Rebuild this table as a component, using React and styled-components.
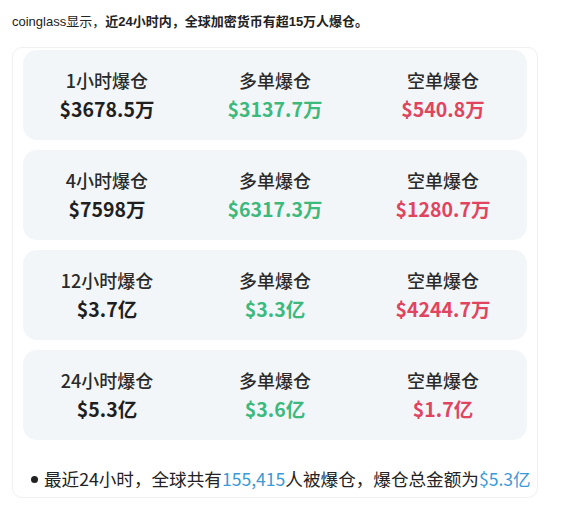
import React from "react";
import styled, { createGlobalStyle } from "styled-components";

const GlobalStyle = createGlobalStyle`
  body {
    margin: 0;
    background: #ffffff;
    font-family: "Noto Sans CJK SC", "Noto Sans", sans-serif;
    color: #222;
  }
`;

const Page = styled.div`
  width: 563px;
  height: 508px;
  padding: 11px 12px 0 12px;
  box-sizing: border-box;
`;

const Intro = styled.p`
  margin: 0;
  font-size: 13px;
  line-height: 22px;
  color: #222;
  font-family: "Liberation Sans", "Noto Sans CJK SC", sans-serif;

  b {
    font-weight: 700;
  }
`;

const Card = styled.div`
  margin-top: 14px;
  width: 526px;
  box-sizing: border-box;
  border: 1px solid #eef0f2;
  border-radius: 10px;
  padding: 2px 10px 0 10px;
  display: flex;
  flex-direction: column;
  gap: 10px;
`;

const Row = styled.div`
  height: 90px;
  border-radius: 14px;
  background: #f3f6f9;
  display: grid;
  grid-template-columns: repeat(3, 1fr);
  align-items: center;
`;

const Cell = styled.div`
  display: flex;
  flex-direction: column;
  align-items: center;
  gap: 2px;
`;

const Label = styled.div`
  font-size: 18px;
  font-weight: 500;
  line-height: 26px;
  color: #2a2a2a;
`;

const colors = {
  dark: "#1f1f1f",
  green: "#3cb97c",
  red: "#e1445f",
};

const Value = styled.div`
  font-size: 19.5px;
  font-weight: 700;
  line-height: 28px;
  color: ${(p) => colors[p.$tone]};
`;

const Summary = styled.div`
  display: flex;
  align-items: center;
  gap: 6px;
  padding: 17px 0 6px 8px;
  font-size: 17.6px;
  line-height: 24px;
  color: #222;
  white-space: nowrap;
`;

const Dot = styled.span`
  width: 7px;
  height: 7px;
  border-radius: 50%;
  background: #222;
  flex: none;
`;

const Blue = styled.span`
  color: #3a9ad9;
`;

const rows = [
  ["1小时爆仓", "$3678.5万", "$3137.7万", "$540.8万"],
  ["4小时爆仓", "$7598万", "$6317.3万", "$1280.7万"],
  ["12小时爆仓", "$3.7亿", "$3.3亿", "$4244.7万"],
  ["24小时爆仓", "$5.3亿", "$3.6亿", "$1.7亿"],
];

export default function App() {
  return (
    <Page>
      <GlobalStyle />
      <Intro>
        coinglass显示，<b>近24小时内，全球加密货币有超15万人爆仓。</b>
      </Intro>
      <Card>
        {rows.map(([label, total, long, short]) => (
          <Row key={label}>
            <Cell>
              <Label>{label}</Label>
              <Value $tone="dark">{total}</Value>
            </Cell>
            <Cell>
              <Label>多单爆仓</Label>
              <Value $tone="green">{long}</Value>
            </Cell>
            <Cell>
              <Label>空单爆仓</Label>
              <Value $tone="red">{short}</Value>
            </Cell>
          </Row>
        ))}
        <Summary>
          <Dot />
          <span>
            最近24小时，全球共有<Blue>155,415</Blue>人被爆仓，爆仓总金额为
            <Blue>$5.3亿</Blue>
          </span>
        </Summary>
      </Card>
    </Page>
  );
}
